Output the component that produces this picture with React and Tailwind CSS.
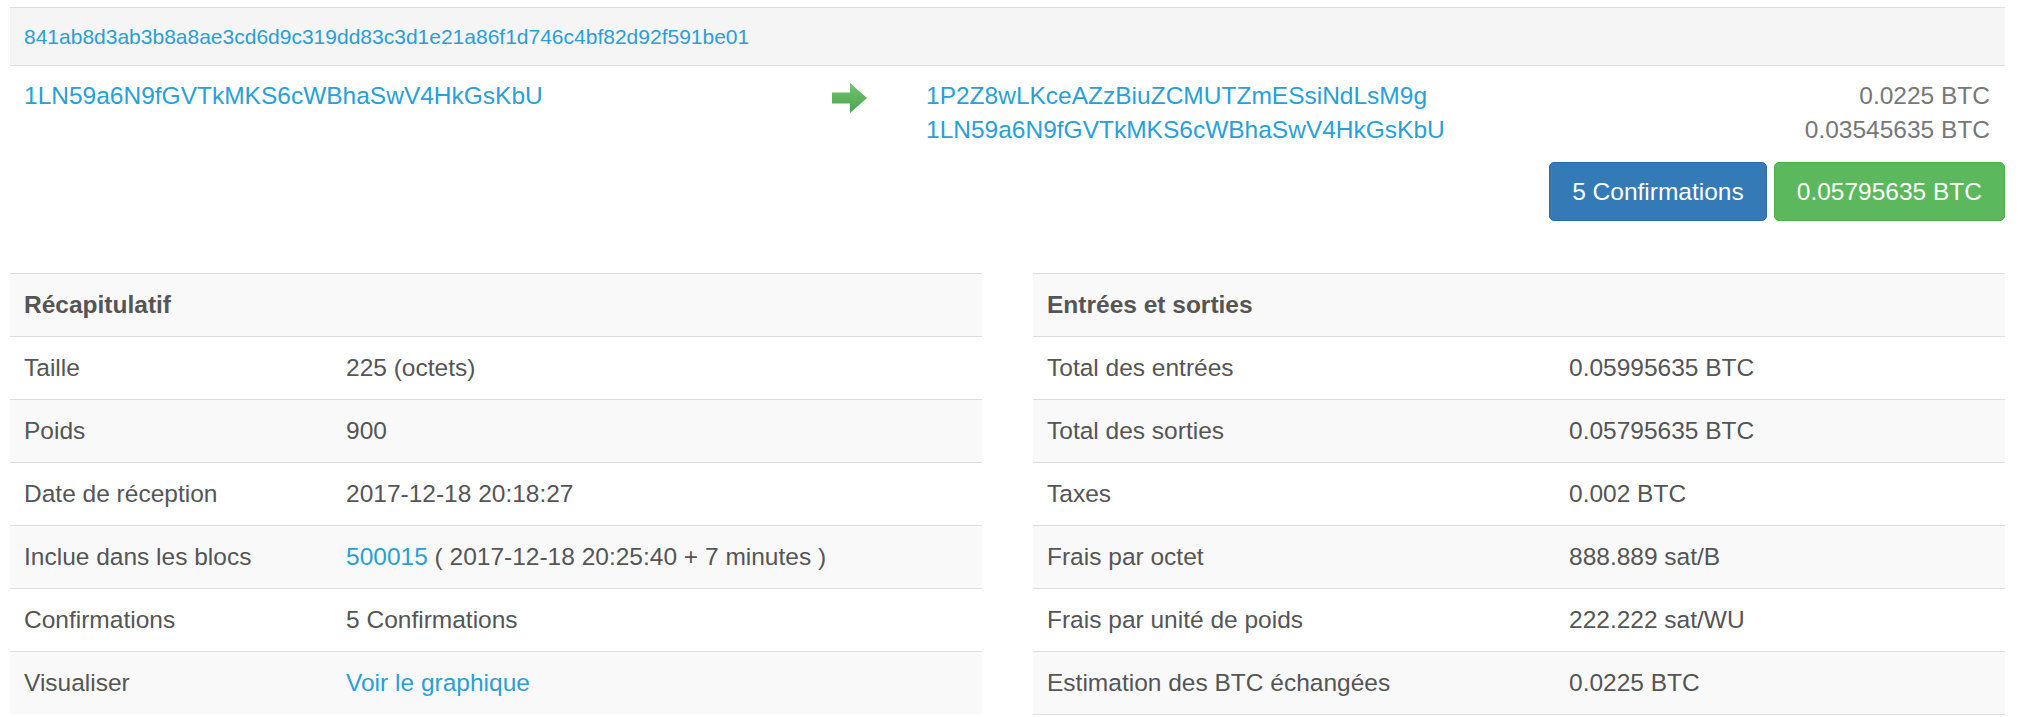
import React from "react";

const summary = [
  ["Taille", "225 (octets)"],
  ["Poids", "900"],
  ["Date de réception", "2017-12-18 20:18:27"],
  ["Inclue dans les blocs", "block"],
  ["Confirmations", "5 Confirmations"],
  ["Visualiser", "graph"],
];

const flows = [
  ["Total des entrées", "0.05995635 BTC"],
  ["Total des sorties", "0.05795635 BTC"],
  ["Taxes", "0.002 BTC"],
  ["Frais par octet", "888.889 sat/B"],
  ["Frais par unité de poids", "222.222 sat/WU"],
  ["Estimation des BTC échangées", "0.0225 BTC"],
];

function Arrow() {
  return (
    <svg width="35" height="30" viewBox="0 0 35 30">
      <defs>
        <linearGradient id="ag" x1="0" y1="0" x2="0" y2="1">
          <stop offset="0" stopColor="#72c672" />
          <stop offset="1" stopColor="#4aa34a" />
        </linearGradient>
      </defs>
      <polygon points="0,9.5 18,9.5 18,0 35,15 18,30 18,20.5 0,20.5" fill="url(#ag)" />
    </svg>
  );
}

function Cell({ value }) {
  if (value === "block") {
    return (
      <span>
        <a className="text-[#2a9fd6]">500015</a> ( 2017-12-18 20:25:40 + 7 minutes )
      </span>
    );
  }
  if (value === "graph") return <a className="text-[#2a9fd6]">Voir le graphique</a>;
  return <span>{value}</span>;
}

function InfoTable({ title, rows, labelWidth, bottomBorder }) {
  return (
    <div className={bottomBorder ? "border-b border-[#ddd]" : ""}>
      <div className="flex h-[63px] items-center border-t border-[#ddd] bg-[#f9f9f9] px-[14px] font-bold">
        {title}
      </div>
      {rows.map(([label, value], i) => (
        <div
          key={label}
          className={`flex h-[63px] items-center border-t border-[#ddd] ${i % 2 === 1 ? "bg-[#f9f9f9]" : "bg-white"}`}
        >
          <div className="shrink-0 px-[14px]" style={{ width: labelWidth }}>
            {label}
          </div>
          <div className="px-[14px]">
            <Cell value={value} />
          </div>
        </div>
      ))}
    </div>
  );
}

export default function App() {
  return (
    <div className="min-h-screen bg-white font-['Liberation_Sans',Arial,sans-serif] text-[24.5px] leading-[34px] text-[#555]">
      <div className="pl-[10px] pr-[13px] pt-[7px]">
        <div className="flex h-[59px] items-center border-y border-[#ddd] bg-[#f5f5f5] px-[14px] text-[21px] text-[#2a9fd6]">
          841ab8d3ab3b8a8ae3cd6d9c319dd83c3d1e21a86f1d746c4bf82d92f591be01
        </div>

        <div className="flex pt-[13px]">
          <div className="w-[808px] shrink-0 px-[14px] text-[#2a9fd6]">1LN59a6N9fGVTkMKS6cWBhaSwV4HkGsKbU</div>
          <div className="w-[94px] shrink-0 px-[14px] pt-[4px]">
            <Arrow />
          </div>
          <div className="flex-1 pl-[14px]">
            <div className="flex justify-between pr-[15px]">
              <a className="text-[#2a9fd6]">1P2Z8wLKceAZzBiuZCMUTZmESsiNdLsM9g</a>
              <span className="text-[#777]">0.0225 BTC</span>
            </div>
            <div className="flex justify-between pr-[15px]">
              <a className="text-[#2a9fd6]">1LN59a6N9fGVTkMKS6cWBhaSwV4HkGsKbU</a>
              <span className="text-[#777]">0.03545635 BTC</span>
            </div>
            <div className="mt-[15px] flex justify-end gap-[7px]">
              <span className="flex h-[59px] items-center rounded-[5px] border border-[#2e6da4] bg-[#337ab7] px-[22px] text-white">
                5 Confirmations
              </span>
              <span className="flex h-[59px] items-center rounded-[5px] border border-[#4cae4c] bg-[#5cb85c] px-[22px] text-white">
                0.05795635 BTC
              </span>
            </div>
          </div>
        </div>

        <div className="mt-[52px] grid grid-cols-2 gap-[51px]">
          <InfoTable title="Récapitulatif" rows={summary} labelWidth={322} />
          <InfoTable title="Entrées et sorties" rows={flows} labelWidth={522} bottomBorder />
        </div>
      </div>
    </div>
  );
}
